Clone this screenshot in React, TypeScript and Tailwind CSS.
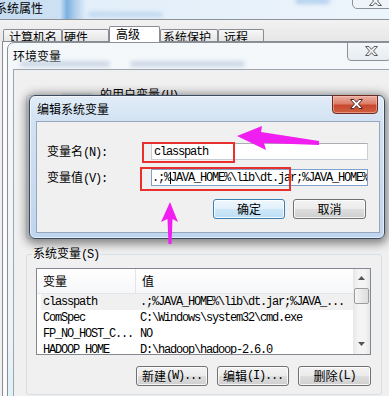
import React from "react";

const MONO = "font-['Liberation_Mono',monospace] tracking-[-1.2px]";

function XGlyph({ className, fill, stroke }: { className: string; fill: string; stroke: string }) {
  return (
    <svg viewBox="0 0 13 10" className={className}>
      <polygon
        points="0.5,0.5 4,0.5 6.5,3.3 9,0.5 12.5,0.5 8.5,5 12.5,9.5 9,9.5 6.5,6.7 4,9.5 0.5,9.5 4.5,5"
        fill={fill}
        stroke={stroke}
        strokeWidth="1"
        strokeLinejoin="round"
      />
    </svg>
  );
}

function Btn({ children, className, primary }: { children: React.ReactNode; className: string; primary?: boolean }) {
  return (
    <div
      className={`flex h-[20px] shrink-0 items-center justify-center rounded-[3px] border ${
        primary
          ? "border-[#3c7fb1] bg-[linear-gradient(to_bottom,#eef7fd_0%,#e1f1fb_48%,#cde7f8_52%,#bedff5_100%)]"
          : "border-[#707070] bg-[linear-gradient(to_bottom,#f3f3f3_0%,#ebebeb_48%,#dddddd_52%,#cfcfcf_100%)]"
      } shadow-[inset_0_0_0_1px_rgba(255,255,255,0.8)] ${className}`}
    >
      {children}
    </div>
  );
}

function Tab({ label, w, pl, selected }: { label: string; w: string; pl: string; selected?: boolean }) {
  return (
    <div
      className={`${w} ${pl} ${
        selected ? "relative z-10 -mb-px h-[16px] bg-white" : "h-[12px] bg-[linear-gradient(to_bottom,#f7f7f7,#e6e6e6)]"
      } shrink-0 whitespace-nowrap rounded-t-[2px] border border-b-0 border-[#898c95] leading-[14px]`}
    >
      {label}
    </div>
  );
}

const rows: [string, string][] = [
  ["classpath", ".;%JAVA_HOME%\\lib\\dt.jar;%JAVA_..."],
  ["ComSpec", "C:\\Windows\\system32\\cmd.exe"],
  ["FP_NO_HOST_C...", "NO"],
  ["HADOOP_HOME", "D:\\hadoop\\hadoop-2.6.0"],
];

export default function App() {
  return (
    <div className="relative h-[396px] w-[389px] overflow-hidden bg-[#f0f0f0] font-['Noto_Sans_CJK_SC',sans-serif] text-[12px] leading-[14px] text-black">
      {/* System properties window (background) */}
      <div className="absolute inset-0 flex flex-col">
        <div className="relative flex h-[20px] shrink-0 overflow-hidden border-b border-[#8e9196] bg-[linear-gradient(to_right,#c6dcf1_0px,#cde1f3_60px,#7cb0e0_67px,#a9cbec_74px,#e2eef9_86px,#edf5fc_100%)]">
          <span className="ml-[-5px] mt-[1px] whitespace-nowrap">系统属性</span>
          <div className="absolute left-[88px] top-[12px] h-[5px] w-[75px] rounded-full bg-[#a8c8e8] opacity-60 blur-[2px]" />
          <div className="absolute left-[295px] top-[-2px] h-[6px] w-[35px] rounded-full bg-[#9cc2e8] opacity-70 blur-[2px]" />
          <div className="ml-auto mr-[-7px] mt-[-11px] flex h-[20px] w-[44px] shrink-0 justify-center rounded-b-[5px] border border-[#8d9197] bg-[#eef4fa] pt-[6px]">
            <XGlyph className="ml-[3px] h-[10px] w-[13px]" fill="#f4f4f4" stroke="#5a5f66" />
          </div>
        </div>
        <div className="flex h-[21px] shrink-0 items-end pl-[3px] bg-[linear-gradient(to_bottom,#f2f2f2,#e7e7e7)]">
          <Tab label="计算机名" w="w-[59px]" pl="pl-[5px]" />
          <Tab label="硬件" w="w-[47px]" pl="pl-[1px]" />
          <Tab label="高级" w="w-[51px]" pl="pl-[6px]" selected />
          <Tab label="系统保护" w="w-[58px]" pl="pl-[2px]" />
          <Tab label="远程" w="w-[46px]" pl="pl-[5px]" />
        </div>
        <div className="ml-[2px] flex-1 border-l border-t border-[#898c95] bg-[#fafafa]" />
      </div>

      {/* Environment variables window */}
      <div className="absolute left-[7px] top-[42px] flex h-[360px] w-[392px] flex-col rounded-t-[7px] border border-[#8b9097] bg-[linear-gradient(to_bottom,#f5f8fb_0%,#edf3f8_85%,#dcf0f8_100%)]">
        <div className="relative flex h-[26px] shrink-0 pl-[5px] pt-[6px]">
          <span className="whitespace-nowrap">环境变量</span>
          <div className="absolute left-[12px] top-[18px] h-[6px] w-[90px] rounded-full bg-[#bccbdc] opacity-70 blur-[2px]" />
          <div className="absolute left-[122px] top-[18px] h-[6px] w-[115px] rounded-full bg-[#bccbdc] opacity-70 blur-[2px]" />
          <div className="absolute left-[339px] top-[-1px] flex h-[19px] w-[44px] justify-center rounded-b-[4px] border border-[#8d9297] bg-[linear-gradient(to_bottom,#f4f7fa,#e6ecf2)] pt-[3px]">
            <XGlyph className="ml-[4px] h-[10px] w-[13px]" fill="#eeeeee" stroke="#5d6167" />
          </div>
        </div>
        <div className="ml-[5px] flex flex-1 flex-col border-l border-t border-[#9da5ae] bg-[#f0f0f0] pl-[12px] pt-[17px]">
          <fieldset className="h-[152px] w-[356px] shrink-0 rounded-[3px] border border-[#d5dfe5]">
            <legend className="ml-[5px] whitespace-nowrap px-[1px] leading-[13px]">
              <span className="inline-block w-[67px]">
                <span className="ml-[29px] inline-block h-[3px] w-[30px] bg-[#aab3be] align-middle opacity-60 blur-[1.5px]" />
              </span>
              的用户变量<span className={MONO}>(U)</span>
            </legend>
          </fieldset>
          <fieldset className="mt-[7px] w-[356px] shrink-0 rounded-[3px] border border-[#d5dfe5]">
            <legend className="ml-[5px] whitespace-nowrap px-[1px] leading-[13px]">
              系统变量<span className={MONO}>(S)</span>
            </legend>
            <div className="flex flex-col pb-[8px] pl-[9px] pt-[6px]">
              <div className="flex h-[87px] w-[335px] border border-[#828790] bg-white">
                <div className="flex w-[316px] flex-col overflow-hidden">
                  <div className="flex h-[25px] shrink-0 items-center border-b border-[#e5e5e5] bg-[linear-gradient(to_bottom,#ffffff,#f6f7f9)]">
                    <div className="flex h-full w-[99px] shrink-0 items-center border-r border-[#e5e5e5] pl-[6px]">变量</div>
                    <div className="pl-[6px]">值</div>
                  </div>
                  {rows.map(([k, v], i) => (
                    <div
                      key={k}
                      className={`flex h-[16px] shrink-0 items-center whitespace-nowrap ${MONO} ${i === 0 ? "ml-[4px] bg-[#f0f0f0]" : ""}`}
                    >
                      <div className={i === 0 ? "w-[95px] shrink-0 pl-[2px]" : "w-[99px] shrink-0 pl-[6px]"}>{k}</div>
                      <div className="pl-[4px]">{v}</div>
                    </div>
                  ))}
                </div>
                <div className="flex w-[17px] flex-col bg-[linear-gradient(to_right,#e6e6e6,#f4f4f4_30%,#f4f4f4_70%,#e6e6e6)]">
                  <div className="flex h-[17px] shrink-0 items-center justify-center">
                    <svg viewBox="0 0 7 4" className="h-[4px] w-[7px]">
                      <polygon points="3.5,0 7,4 0,4" fill="#555555" />
                    </svg>
                  </div>
                  <div className="mx-[1px] mt-[2px] h-[16px] shrink-0 rounded-[2px] border border-[#9c9c9c] bg-[linear-gradient(to_right,#f5f5f5,#dcdcdc)]" />
                  <div className="flex-1" />
                  <div className="flex h-[17px] shrink-0 items-center justify-center">
                    <svg viewBox="0 0 7 4" className="mb-[3px] h-[4px] w-[7px]">
                      <polygon points="0,0 7,0 3.5,4" fill="#555555" />
                    </svg>
                  </div>
                </div>
              </div>
              <div className="mt-[11px] flex w-[335px] pl-[100px]">
                <Btn className="w-[72px]">
                  新建<span className={MONO}>(W)...</span>
                </Btn>
                <Btn className="ml-[9px] w-[72px]">
                  编辑<span className={MONO}>(I)...</span>
                </Btn>
                <Btn className="ml-[9px] w-[73px]">
                  删除<span className={MONO}>(L)</span>
                </Btn>
              </div>
            </div>
          </fieldset>
        </div>
      </div>

      {/* Edit system variable dialog */}
      <div className="absolute left-[29px] top-[95px] flex h-[144px] w-[356px] flex-col rounded-[6px] border border-[#3c4c60] bg-[linear-gradient(to_bottom,#e1ecf7_0px,#d2e2f3_26px,#bfd5ee_100%)] shadow-[inset_0_0_0_1px_rgba(255,255,255,0.55),0_2px_10px_3px_rgba(0,0,0,0.45)]">
        <div className="relative flex h-[25px] shrink-0 pl-[7px] pt-[6px]">
          <span className="whitespace-nowrap">编辑系统变量</span>
          <div className="absolute left-[302px] top-[-1px] flex h-[19px] w-[46px] justify-center rounded-b-[4px] border border-[#6e2c21] bg-[linear-gradient(to_bottom,#eab0a3_0%,#dd7e6a_45%,#c8472f_55%,#d0603f_100%)] pt-[3px] shadow-[inset_0_0_0_1px_rgba(255,200,190,0.5)]">
            <XGlyph className="ml-[3px] h-[10px] w-[13px]" fill="#ffffff" stroke="#4a2a26" />
          </div>
        </div>
        <div className="ml-[6px] flex h-[112px] w-[344px] flex-col border border-[#97a7bb] bg-[#f0f0f0] pl-[10px] pt-[21px]">
          <div className="flex h-[17px] items-center">
            <div className="w-[104px] shrink-0 whitespace-nowrap">
              变量名<span className={MONO}>(N):</span>
            </div>
            <div className={`flex h-[17px] w-[217px] items-center whitespace-nowrap border border-[#c8ced6] border-t-[#abadb3] bg-white pl-[2px] ${MONO}`}>
              classpath
            </div>
          </div>
          <div className="mt-[9px] flex h-[17px] items-center">
            <div className="w-[104px] shrink-0 whitespace-nowrap">
              变量值<span className={MONO}>(V):</span>
            </div>
            <div className={`flex h-[17px] w-[217px] items-center overflow-hidden whitespace-nowrap border border-[#7da2ce] bg-white ${MONO}`}>
              <span>.;%</span>
              <span className="-mr-px inline-block h-[12px] w-px shrink-0 bg-black" />
              <span>{"JAVA_HOME%\\lib\\dt.jar;%JAVA_HOME%\\lib\\tools.jar"}</span>
            </div>
          </div>
          <div className="mt-[13px] flex pl-[166px]">
            <Btn className="w-[72px]" primary>
              确定
            </Btn>
            <Btn className="ml-[8px] w-[73px]">取消</Btn>
          </div>
        </div>
      </div>

      {/* Annotations */}
      <div className="absolute left-[142px] top-[142px] h-[21px] w-[93px] border-2 border-[#e8302e]" />
      <div className="absolute left-[140px] top-[167px] h-[24px] w-[151px] border-2 border-[#e8302e]" />
      <svg className="pointer-events-none absolute left-0 top-0" width="389" height="396" viewBox="0 0 389 396">
        <polygon points="237,136 262,126 261,132 319,141 319,145 264,143 266,150" fill="#f01ef0" />
        <polygon points="170,202 178,222 172.5,219 171.5,244 168.5,244 167.5,219 161,222" fill="#f01ef0" />
      </svg>
    </div>
  );
}
